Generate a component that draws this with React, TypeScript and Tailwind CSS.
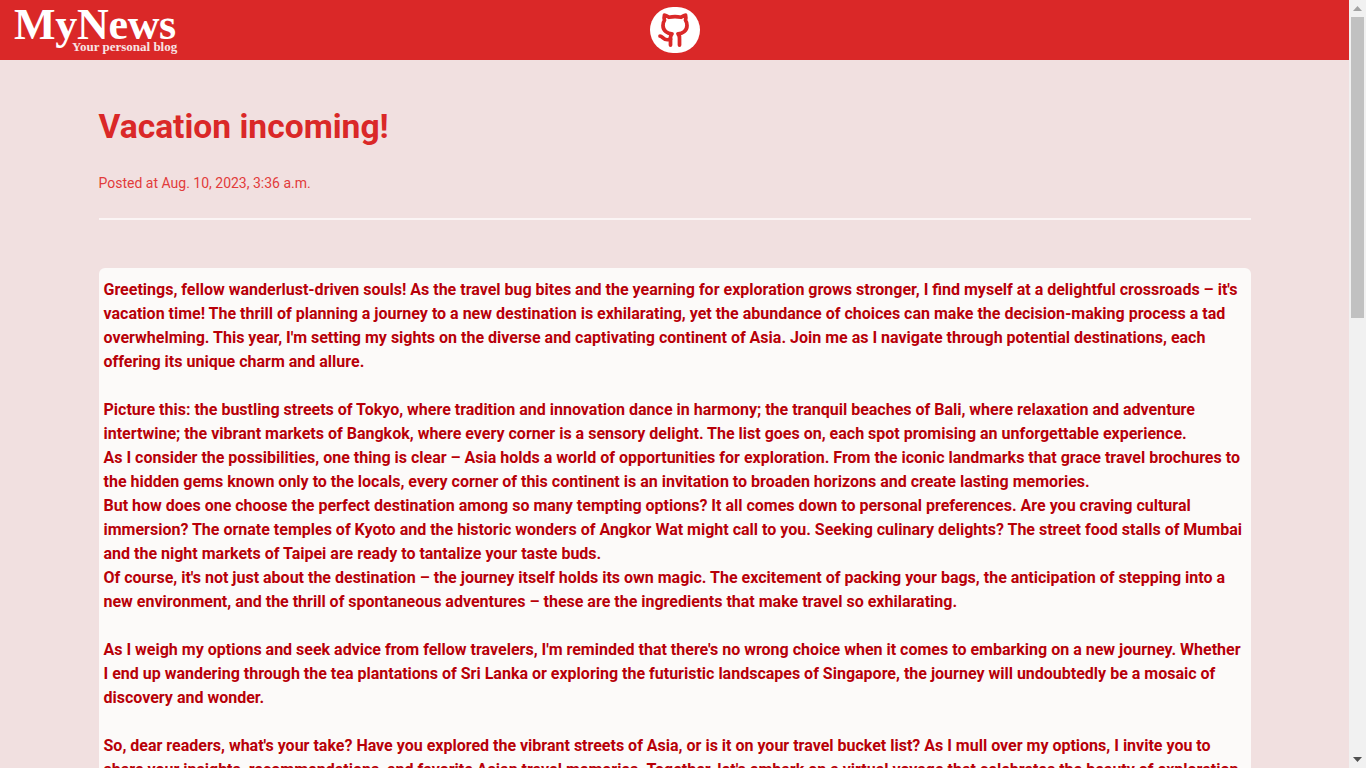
import { Github } from 'lucide-react';

const paragraphs = [
  "Greetings, fellow wanderlust-driven souls! As the travel bug bites and the yearning for exploration grows stronger, I find myself at a delightful crossroads – it's vacation time! The thrill of planning a journey to a new destination is exhilarating, yet the abundance of choices can make the decision-making process a tad overwhelming. This year, I'm setting my sights on the diverse and captivating continent of Asia. Join me as I navigate through potential destinations, each offering its unique charm and allure.",
  '',
  'Picture this: the bustling streets of Tokyo, where tradition and innovation dance in harmony; the tranquil beaches of Bali, where relaxation and adventure intertwine; the vibrant markets of Bangkok, where every corner is a sensory delight. The list goes on, each spot promising an unforgettable experience.',
  'As I consider the possibilities, one thing is clear – Asia holds a world of opportunities for exploration. From the iconic landmarks that grace travel brochures to the hidden gems known only to the locals, every corner of this continent is an invitation to broaden horizons and create lasting memories.',
  'But how does one choose the perfect destination among so many tempting options? It all comes down to personal preferences. Are you craving cultural immersion? The ornate temples of Kyoto and the historic wonders of Angkor Wat might call to you. Seeking culinary delights? The street food stalls of Mumbai and the night markets of Taipei are ready to tantalize your taste buds.',
  "Of course, it's not just about the destination – the journey itself holds its own magic. The excitement of packing your bags, the anticipation of stepping into a new environment, and the thrill of spontaneous adventures – these are the ingredients that make travel so exhilarating.",
  '',
  "As I weigh my options and seek advice from fellow travelers, I'm reminded that there's no wrong choice when it comes to embarking on a new journey. Whether I end up wandering through the tea plantations of Sri Lanka or exploring the futuristic landscapes of Singapore, the journey will undoubtedly be a mosaic of discovery and wonder.",
  '',
  "So, dear readers, what's your take? Have you explored the vibrant streets of Asia, or is it on your travel bucket list? As I mull over my options, I invite you to share your insights, recommendations, and favorite Asian travel memories. Together, let's embark on a virtual voyage that celebrates the beauty of exploration and the joy of discovering new horizons.",
];

const Scrollbar = () => (
  <div className="w-[17px] shrink-0 h-full bg-[#f1f1f1] flex flex-col items-center">
    <div className="h-[17px] flex items-center justify-center">
      <svg width="9" height="5" viewBox="0 0 9 5"><path d="M4.5 0 9 5H0z" fill="#a3a3a3" /></svg>
    </div>
    <div className="flex-1 w-full">
      <div className="mx-auto w-[13px] h-[301px] bg-[#c1c1c1]" />
    </div>
    <div className="h-[17px] flex items-center justify-center">
      <svg width="9" height="5" viewBox="0 0 9 5"><path d="M0 0h9L4.5 5z" fill="#505050" /></svg>
    </div>
  </div>
);

export default function App() {
  return (
    <div className="h-screen flex overflow-hidden bg-[#f1e0e0] font-['Roboto',sans-serif]">
      <div className="flex-1 min-w-0 h-full overflow-hidden">
        <header className="h-[60px] bg-[#da2828] grid grid-cols-3 items-center">
          <div className="pl-[14px] h-full relative font-['Liberation_Serif',serif] text-white">
            <span className="block text-[44px] leading-[50px] font-bold tracking-[-0.3px]">MyNews</span>
            <span className="absolute left-[72px] top-[40px] text-[13px] leading-[14px] font-bold whitespace-nowrap text-[#f8e4e4]">Your personal blog</span>
          </div>
          <div className="flex justify-center pl-[1px]">
            <a href="#" className="w-[50px] h-[46px] rounded-full bg-white flex items-center justify-center text-[#da2828]">
              <Github size={36} strokeWidth={2.5} />
            </a>
          </div>
          <div />
        </header>
        <main className="max-w-6xl mx-auto">
          <h1 className="pt-[45px] text-[33.6px] leading-[44px] font-bold text-[#da2828]">Vacation incoming!</h1>
          <p className="mt-[24px] text-sm leading-5 font-normal text-[#e23b3b]">Posted at Aug. 10, 2023, 3:36 a.m.</p>
          <hr className="mt-[25px] border-t-2 border-[#fbf5f5]" />
          <article className="mt-12 mb-12 bg-[#fcfaf9] rounded-md pl-[5px] pr-[3px] py-[10px] text-base leading-6 font-bold text-[#b80008]">
            {paragraphs.map((p, i) => (
              <p key={i} className="min-h-6">{p}</p>
            ))}
          </article>
        </main>
      </div>
      <Scrollbar />
    </div>
  );
}
